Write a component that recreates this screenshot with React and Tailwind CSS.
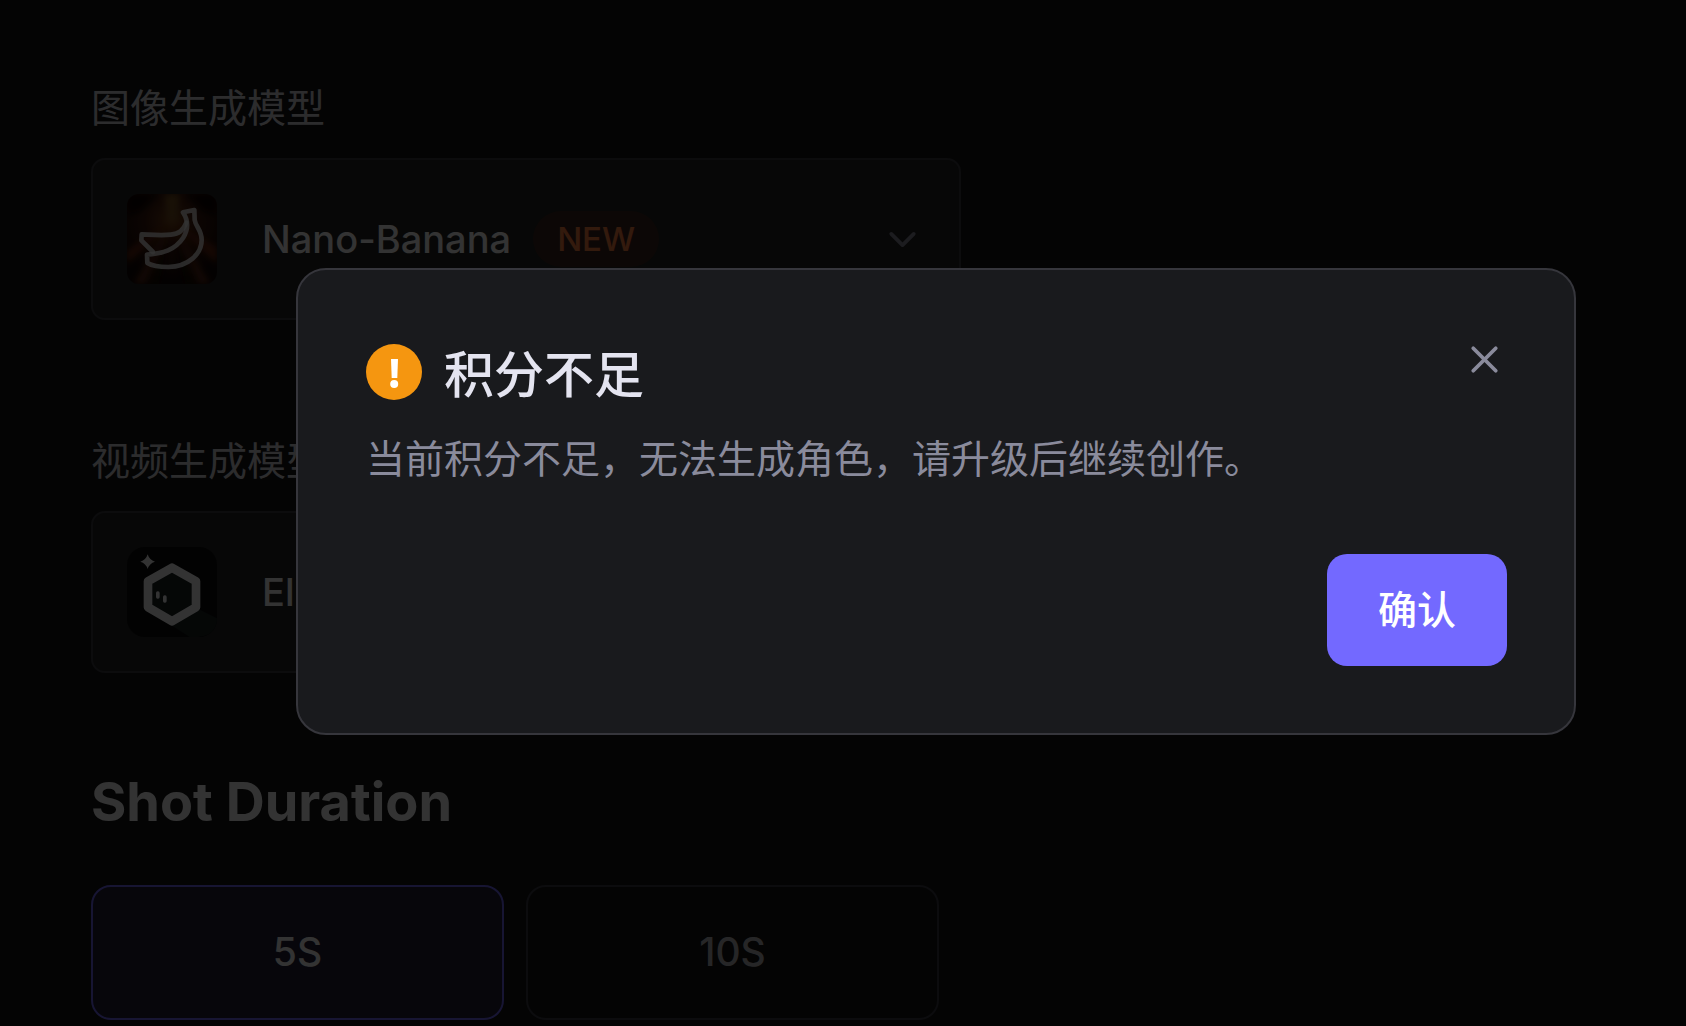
import { useState } from "react";
import { ChevronDown, X } from "lucide-react";

const durations = ["5S", "10S"];

function BananaLogo() {
  return (
    <svg viewBox="0 0 270 270" className="size-[90px] shrink-0 rounded-xl" aria-hidden="true">
      <defs>
        <radialGradient id="banana-glow" cx="0.5" cy="0.3" r="0.65">
          <stop offset="0" stopColor="#7a4418" />
          <stop offset="0.45" stopColor="#3c180c" />
          <stop offset="1" stopColor="#120606" />
        </radialGradient>
        <filter id="ray-blur">
          <feGaussianBlur stdDeviation="9" />
        </filter>
      </defs>
      <rect width="270" height="270" fill="url(#banana-glow)" />
      <g filter="url(#ray-blur)">
        <path d="M112 0h46l-12 90h-22z" fill="#7a5224" />
        <path d="M135 80 0 170v40zM135 80l135 80v50z" fill="#6a2610" />
        <path d="M135 80 20 270h34zM135 80l115 190h-34z" fill="#5c2612" />
        <path d="M135 110 66 270h30zM135 110l69 160h-30z" fill="#180806" />
        <path d="M0 0h90L40 50 0 60zM270 0h-90l50 50 40 10z" fill="#0a0404" />
      </g>
      <g fill="none" stroke="#ffffff" strokeOpacity="0.8" strokeWidth="14" strokeLinejoin="round" strokeLinecap="round">
        <path d="M168 55 202 48 203 78C206 98 224 108 224 138C224 180 184 218 124 219C98 219 76 216 61 207L60 182C108 178 144 168 168 132C184 106 186 82 168 55Z" />
        <path d="M178 86C168 110 156 120 132 122C100 125 70 122 44 121L43 139 78 174" />
      </g>
    </svg>
  );
}

function HexagonLogo() {
  return (
    <svg viewBox="0 0 270 270" className="size-[90px] shrink-0 rounded-[18px]" aria-hidden="true">
      <rect width="270" height="270" fill="#0c0c0c" />
      <path d="M214 186 270 214V230Q260 270 200 270H188L128 232Z" fill="#1a2322" />
      <path
        d="M135 62 207 103V181L135 223 63 181V103Z"
        fill="#1a2322"
        stroke="#ffffff"
        strokeWidth="26"
        strokeLinejoin="round"
      />
      <rect x="87" y="133" width="11" height="22" rx="5" fill="#ffffff" />
      <rect x="108" y="145" width="11" height="22" rx="5" fill="#ffffff" />
      <path d="M62 22Q67 39 84 44Q67 49 62 66Q57 49 40 44Q57 39 62 22Z" fill="#ffffff" />
    </svg>
  );
}

const models = [
  { id: "image-model", label: "图像生成模型", name: "Nano-Banana", badge: "NEW", Logo: BananaLogo },
  { id: "video-model", label: "视频生成模型", name: "El", Logo: HexagonLogo },
];

function ModelField({ id, label, name, badge, Logo }) {
  return (
    <div className="max-w-[870px]">
      <label htmlFor={id} className="block text-[39px] leading-[58px] text-[#dcdce2]">
        {label}
      </label>
      <div className="mt-[21px] flex items-center rounded-[14px] border-2 border-[#3c3c42] bg-[#232323] p-[34px]">
        <Logo />
        <select
          id={id}
          className="field-sizing-content ml-[45px] appearance-none bg-transparent text-[38px] leading-[58px] font-medium text-white outline-none"
        >
          <option>{name}</option>
        </select>
        {badge && (
          <span className="ml-[22px] rounded-full bg-[#3f2622] px-6 text-[33px] leading-[56px] font-medium text-[#ff8040]">
            {badge}
          </span>
        )}
        <ChevronDown className="ml-auto size-[45px] shrink-0 text-[#8a8b9c]" />
      </div>
    </div>
  );
}

function CreditsDialog({ onClose }) {
  return (
    <div className="fixed inset-0 flex items-center bg-black/80 pr-[110px] pb-[23px] pl-[296px]">
      <div
        role="alertdialog"
        aria-modal="true"
        aria-labelledby="credits-title"
        aria-describedby="credits-text"
        className="w-full rounded-[30px] border-2 border-[#36363c] bg-[#191a1d] py-[67px] pr-[67px] pl-[68px]"
      >
        <div className="flex items-start justify-between">
          <div className="flex items-start gap-[22px]">
            <svg viewBox="0 0 56 56" className="mt-[7px] size-14 shrink-0" aria-hidden="true">
              <circle cx="28" cy="28" r="28" fill="#f59610" />
              <path d="M25 15h7l-.7 19h-5.6z" fill="#ffffff" />
              <circle cx="28.2" cy="40" r="4" fill="#ffffff" />
            </svg>
            <h2 id="credits-title" className="text-[50px] leading-[76px] font-medium text-[#e4e4f0]">
              积分不足
            </h2>
          </div>
          <button type="button" aria-label="关闭" onClick={onClose} className="text-[#8a8b9c]">
            <X className="size-[45px]" />
          </button>
        </div>
        <p id="credits-text" className="mt-[17px] text-[39px] leading-[58px] text-[#8a8b9c]">
          当前积分不足，无法生成角色，请升级后继续创作。
        </p>
        <div className="mt-[66px] flex justify-end">
          <button
            type="button"
            onClick={onClose}
            className="h-28 w-[180px] rounded-[20px] bg-[#7369ff] text-[39px] leading-[58px] font-medium text-white"
          >
            确认
          </button>
        </div>
      </div>
    </div>
  );
}

function App() {
  const [duration, setDuration] = useState("5S");
  const [open, setOpen] = useState(true);

  return (
    <div className="min-h-screen bg-[#161616] font-['Inter','Noto_Sans_CJK_SC',sans-serif] text-white">
      <main className="px-[91px] pt-[79px]">
        <div className="flex flex-col gap-[112px]">
          {models.map((model) => (
            <ModelField key={model.id} {...model} />
          ))}
        </div>

        <h2 className="mt-24 text-[54px] leading-[66px] font-bold">Shot Duration</h2>
        <div className="mt-[50px] grid max-w-[848px] grid-cols-2 gap-[22px]">
          {durations.map((item) => (
            <button
              key={item}
              type="button"
              aria-pressed={duration === item}
              onClick={() => setDuration(item)}
              className={`h-[135px] rounded-[20px] border-2 text-[39px] font-medium ${
                duration === item
                  ? "border-[#7369ff] bg-[#242138] text-white"
                  : "border-[#3c3c46] text-[#bebec2]"
              }`}
            >
              {item}
            </button>
          ))}
        </div>
      </main>

      {open && <CreditsDialog onClose={() => setOpen(false)} />}
    </div>
  );
}

export default App;
